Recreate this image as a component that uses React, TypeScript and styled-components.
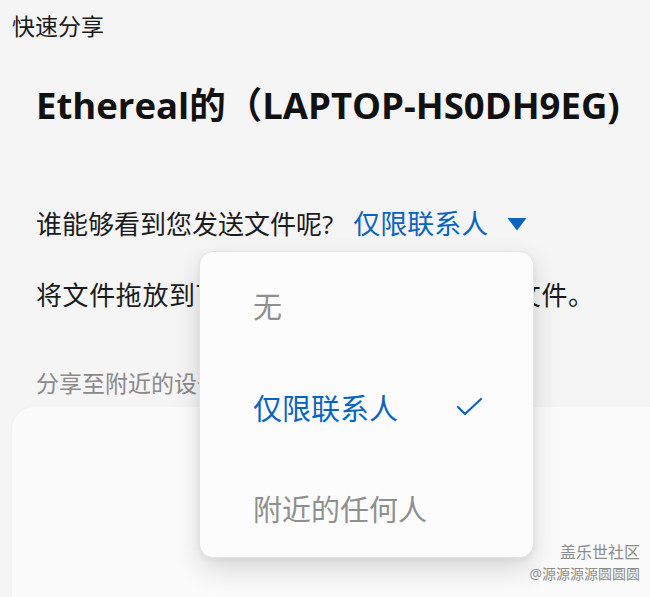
import styled, { createGlobalStyle } from 'styled-components';

const GlobalStyle = createGlobalStyle`
  html, body {
    margin: 0;
    padding: 0;
    background: #f5f5f5;
  }
  body {
    font-family: 'Open Sans', 'Noto Sans CJK SC', sans-serif;
    color: #1b1b1b;
  }
`;

const Page = styled.div`
  position: relative;
  width: 650px;
  height: 597px;
  overflow: hidden;
  display: flex;
  flex-direction: column;
  background: #f5f5f5;
`;

const AppTitle = styled.div`
  font-size: 23px;
  line-height: 30px;
  padding: 11px 12px 0;
  color: #1a1a1a;
`;

const Content = styled.div`
  padding: 0 0 0 36px;
  display: flex;
  flex-direction: column;
`;

const DeviceName = styled.h1`
  margin: 40px 0 0;
  font-size: 36.5px;
  line-height: 48px;
  font-weight: 700;
  color: #111;
  white-space: nowrap;
`;

const Line = styled.div`
  font-size: 26px;
  line-height: 34px;
  white-space: nowrap;
  display: flex;
  align-items: center;
`;

const Question = styled(Line)`
  margin-top: 78px;
`;

const Hint = styled(Line)`
  margin-top: 37px;
  letter-spacing: 0.6px;
`;

const Picker = styled.span`
  display: inline-flex;
  align-items: center;
  gap: 19px;
  margin-left: 20px;
  font-size: 27px;
  color: #0a64bf;
`;

const SectionLabel = styled.div`
  margin-top: 56px;
  font-size: 23px;
  line-height: 30px;
  color: #8a8a8a;
`;

const Card = styled.div`
  flex: 1;
  margin: 9px 0 0 12px;
  background: #fbfbfb;
  border-top-left-radius: 22px;
  box-shadow: 0 0 3px rgba(0, 0, 0, 0.04);
`;

const Menu = styled.div`
  position: absolute;
  left: 199px;
  top: 251px;
  width: 335px;
  height: 307px;
  box-sizing: border-box;
  background: #fcfcfc;
  border: 1px solid #e3e3e3;
  border-radius: 14px;
  box-shadow: 0 12px 28px rgba(0, 0, 0, 0.14), 0 2px 6px rgba(0, 0, 0, 0.05);
  display: flex;
  flex-direction: column;
  justify-content: space-between;
  padding: 33px 0 29px;
`;

const MenuItem = styled.div<{ $active?: boolean }>`
  display: flex;
  align-items: center;
  justify-content: space-between;
  height: 40px;
  padding: 0 50px 0 53px;
  font-size: 29px;
  color: ${(p) => (p.$active ? '#0a64bf' : '#8f8f8f')};
`;

const Watermark = styled.div`
  position: absolute;
  right: 10px;
  bottom: 12px;
  text-align: right;
  color: #8c8c8c;
  line-height: 22px;
`;

const WatermarkTitle = styled.div`
  font-size: 16px;
`;

const WatermarkSub = styled.div`
  font-size: 14px;
`;

function Caret() {
  return (
    <svg width="20" height="14" viewBox="0 0 20 14">
      <path d="M0.5 1 L19.5 1 L10 13.5 Z" fill="#0a64bf" />
    </svg>
  );
}

function Check() {
  return (
    <svg width="27" height="20" viewBox="0 0 27 20">
      <path
        d="M2 10 L9 17 L25 2"
        fill="none"
        stroke="#0a64bf"
        strokeWidth="2.2"
        strokeLinecap="round"
        strokeLinejoin="round"
      />
    </svg>
  );
}

const options = ['无', '仅限联系人', '附近的任何人'];
const selected = '仅限联系人';

export default function App() {
  return (
    <Page>
      <GlobalStyle />
      <AppTitle>快速分享</AppTitle>
      <Content>
        <DeviceName>Ethereal的（LAPTOP-HS0DH9EG)</DeviceName>
        <Question>
          谁能够看到您发送文件呢?
          <Picker>
            {selected}
            <Caret />
          </Picker>
        </Question>
        <Hint>将文件拖放到下方的设备上，就可以发送文件。</Hint>
        <SectionLabel>分享至附近的设备</SectionLabel>
      </Content>
      <Card />
      <Menu>
        {options.map((opt) => (
          <MenuItem key={opt} $active={opt === selected}>
            {opt}
            {opt === selected && <Check />}
          </MenuItem>
        ))}
      </Menu>
      <Watermark>
        <WatermarkTitle>盖乐世社区</WatermarkTitle>
        <WatermarkSub>@源源源源圆圆圆</WatermarkSub>
      </Watermark>
    </Page>
  );
}
